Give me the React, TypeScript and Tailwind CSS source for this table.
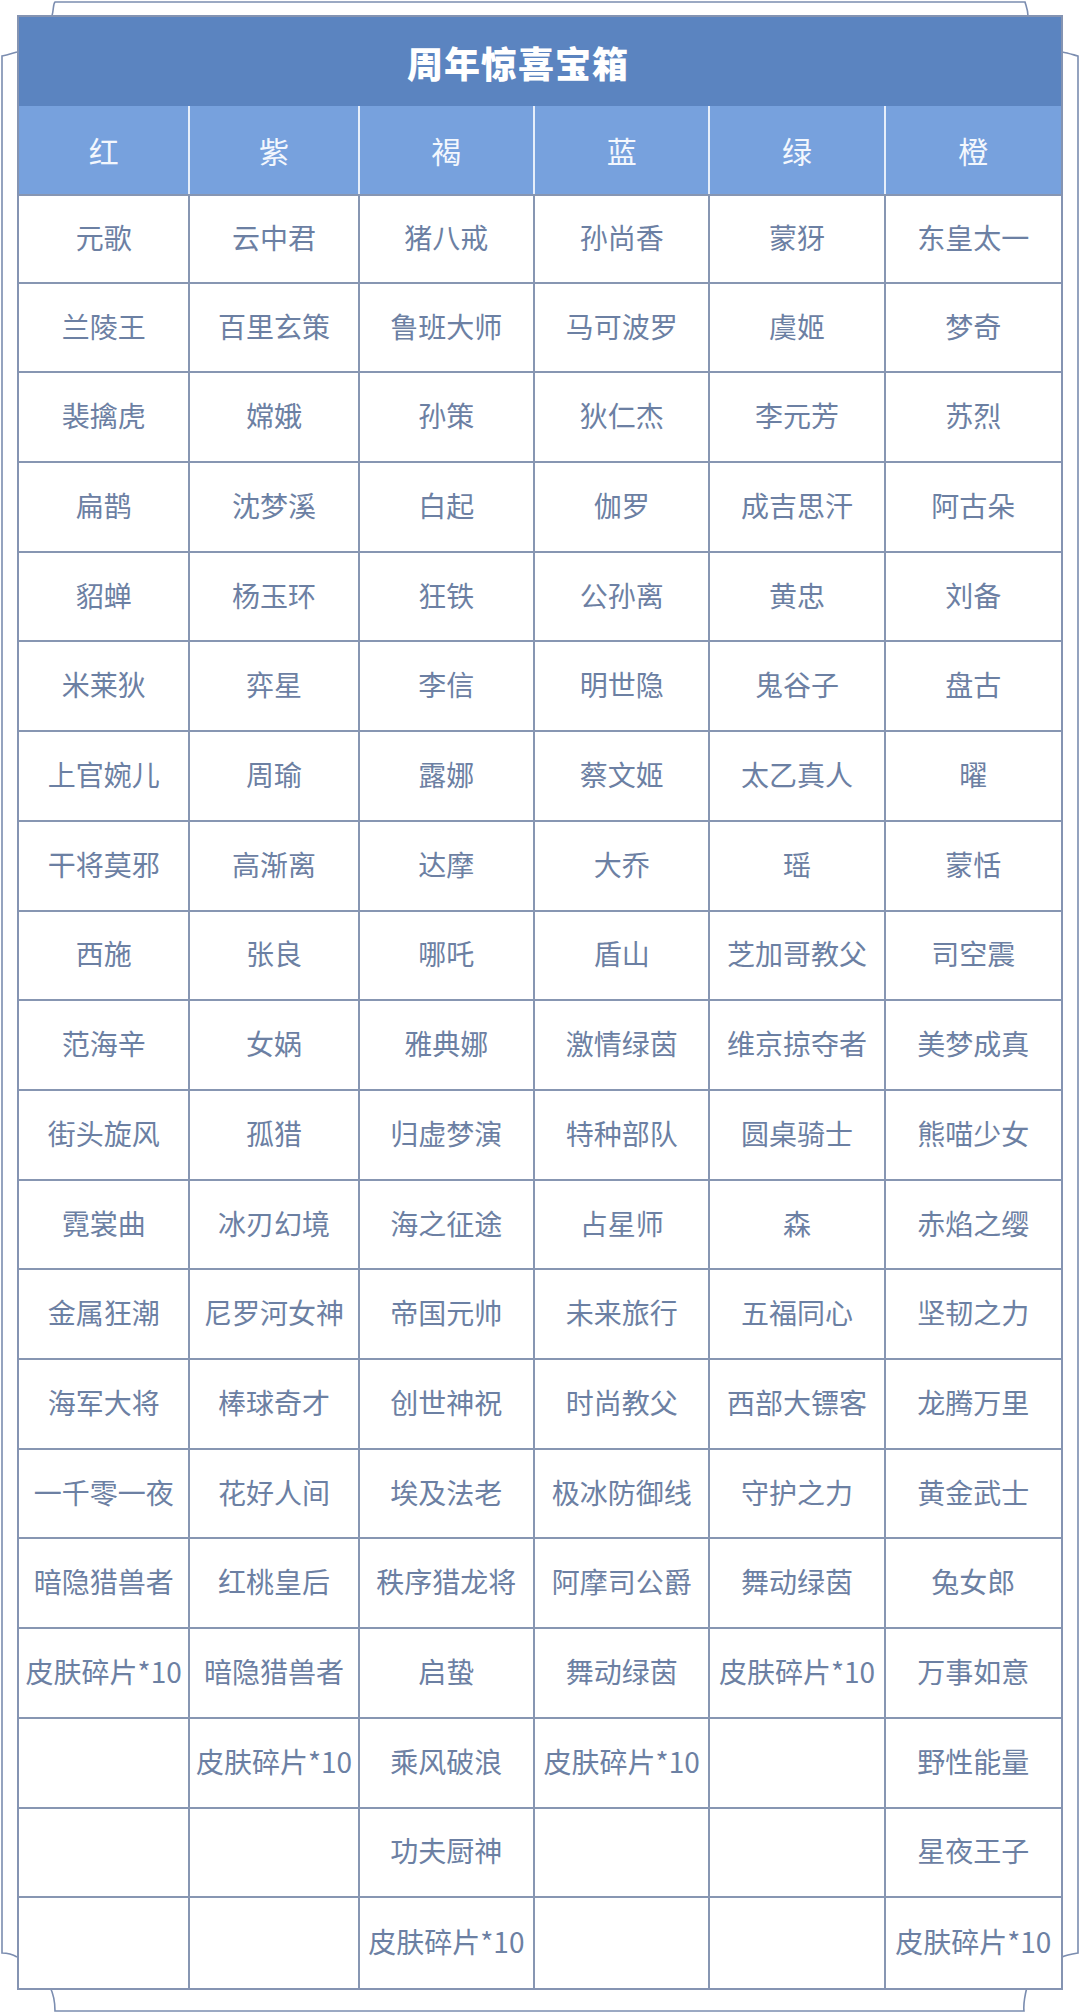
import React from "react";

const HEADERS = ["红", "紫", "褐", "蓝", "绿", "橙"];

const COLUMNS: string[][] = [
  ["元歌", "兰陵王", "裴擒虎", "扁鹊", "貂蝉", "米莱狄", "上官婉儿", "干将莫邪", "西施", "范海辛", "街头旋风", "霓裳曲", "金属狂潮", "海军大将", "一千零一夜", "暗隐猎兽者", "皮肤碎片*10"],
  ["云中君", "百里玄策", "嫦娥", "沈梦溪", "杨玉环", "弈星", "周瑜", "高渐离", "张良", "女娲", "孤猎", "冰刃幻境", "尼罗河女神", "棒球奇才", "花好人间", "红桃皇后", "暗隐猎兽者", "皮肤碎片*10"],
  ["猪八戒", "鲁班大师", "孙策", "白起", "狂铁", "李信", "露娜", "达摩", "哪吒", "雅典娜", "归虚梦演", "海之征途", "帝国元帅", "创世神祝", "埃及法老", "秩序猎龙将", "启蛰", "乘风破浪", "功夫厨神", "皮肤碎片*10"],
  ["孙尚香", "马可波罗", "狄仁杰", "伽罗", "公孙离", "明世隐", "蔡文姬", "大乔", "盾山", "激情绿茵", "特种部队", "占星师", "未来旅行", "时尚教父", "极冰防御线", "阿摩司公爵", "舞动绿茵", "皮肤碎片*10"],
  ["蒙犽", "虞姬", "李元芳", "成吉思汗", "黄忠", "鬼谷子", "太乙真人", "瑶", "芝加哥教父", "维京掠夺者", "圆桌骑士", "森", "五福同心", "西部大镖客", "守护之力", "舞动绿茵", "皮肤碎片*10"],
  ["东皇太一", "梦奇", "苏烈", "阿古朵", "刘备", "盘古", "曜", "蒙恬", "司空震", "美梦成真", "熊喵少女", "赤焰之缨", "坚韧之力", "龙腾万里", "黄金武士", "兔女郎", "万事如意", "野性能量", "星夜王子", "皮肤碎片*10"],
];

const ROWS = 20;

// Back sheet outline peeking out behind the table
function BackSheet() {
  return (
    <svg
      className="absolute inset-0 pointer-events-none"
      width="1080"
      height="2013"
      viewBox="0 0 1080 2013"
      fill="none"
      stroke="#7b8db0"
      strokeWidth="1.6"
    >
      <path d="M52 16 C54 8 53 4 55 2 L1025 2 C1026 6 1028 10 1028 16" />
      <path d="M1062 52 C1068 53 1074 55 1078 56 L1078 1953 C1072 1954 1066 1955 1062 1957" />
      <path d="M1027 1987 C1025 1995 1023 2003 1024 2011 L55 2011 C55 2003 53 1993 50 1987" />
      <path d="M17 1957 C12 1954 6 1953 2 1953 L2 56 C8 55 13 53 17 52" />
    </svg>
  );
}

export default function App() {
  return (
    <div
      className="relative w-[1080px] h-[2013px] bg-white overflow-hidden"
      style={{ fontFamily: '"Noto Sans CJK SC", "Noto Sans", sans-serif' }}
    >
      <BackSheet />

      <div className="relative z-10 ml-[17px] pt-[15px] w-[1046px]">
        <div className="border-2 border-[#8594b2] bg-white">
          {/* Title */}
          <div className="h-[89px] bg-[#5b84c0] flex items-center justify-center pr-[44px]">
            <span className="text-white text-[36px] font-black tracking-[1px] leading-none">
              周年惊喜宝箱
            </span>
          </div>

          {/* Column headers */}
          <div className="h-[88px] bg-[#77a1dd] grid grid-cols-[172fr_170fr_176fr_176fr_176fr_176fr]">
            {HEADERS.map((h, i) => (
              <div
                key={h}
                className={
                  "flex items-center justify-center text-[#f3f7fd] text-[30px] leading-none " +
                  (i < HEADERS.length - 1 ? "border-r-2 border-[#e6eefa]" : "")
                }
              >
                {h}
              </div>
            ))}
          </div>

          {/* Data grid */}
          <div className="h-[1794px] grid grid-cols-[172fr_170fr_176fr_176fr_176fr_176fr] grid-rows-[repeat(20,minmax(0,1fr))] grid-flow-col">
            {COLUMNS.map((col, c) =>
              Array.from({ length: ROWS }).map((_, r) => (
                <div
                  key={c + "-" + r}
                  className={
                    "flex items-center justify-center text-[#6c80a3] text-[28px] leading-none whitespace-nowrap border-[#8796b2] pb-[4px] " +
                    (c < COLUMNS.length - 1 ? "border-r-2 " : "") +
                    (r === 0 ? "border-t-2 " : "") +
                    (r < ROWS - 1 ? "border-b-2" : "")
                  }
                >
                  {col[r] ?? ""}
                </div>
              ))
            )}
          </div>
        </div>
      </div>
    </div>
  );
}
